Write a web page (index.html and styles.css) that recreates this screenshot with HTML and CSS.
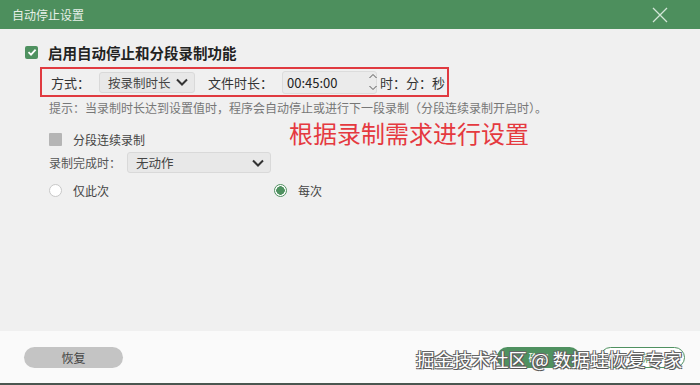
FILE: index.html
```html
<!DOCTYPE html>
<html>
<head lang="zh">
    <meta charset="UTF-8">
    <title>自动停止设置</title>
    <link rel="stylesheet" href="styles.css">
</head>
<body>
    <div class="dialog">
        <div class="titlebar">
            <span class="title">自动停止设置</span>
            <svg class="close" width="16" height="16" viewBox="0 0 16 16">
                <path d="M1 1 L15 15 M15 1 L1 15" stroke="#d3e6d8" stroke-width="1.3" fill="none"/>
            </svg>
        </div>
        <div class="content">
            <div class="main-check">
                <span class="chk on">
                    <svg width="12" height="12" viewBox="0 0 12 12"><path d="M2.5 6.2 L5 8.6 L9.6 3.6" stroke="#fff" stroke-width="1.8" fill="none"/></svg>
                </span>
                <span class="main-label">启用自动停止和分段录制功能</span>
            </div>
            <div class="mode-box">
                <span class="lbl">方式：</span>
                <div class="select sel-mode">
                    <span>按录制时长</span>
                    <svg width="14" height="10" viewBox="0 0 14 10"><path d="M2 2.5 L7 7.5 L12 2.5" stroke="#333" stroke-width="2" fill="none"/></svg>
                </div>
                <span class="lbl lbl-len">文件时长：</span>
                <div class="time-input">
                    <span>00:45:00</span>
                    <svg width="10" height="20" viewBox="0 0 10 20"><path d="M1.5 6 L5 2.5 L8.5 6 M1.5 14 L5 17.5 L8.5 14" stroke="#555" stroke-width="1" fill="none"/></svg>
                </div>
                <span class="unit">时：分：秒</span>
            </div>
            <p class="hint">提示：当录制时长达到设置值时，程序会自动停止或进行下一段录制（分段连续录制开启时）。</p>
            <div class="seg-row">
                <span class="chk off"></span>
                <span>分段连续录制</span>
            </div>
            <div class="done-row">
                <span>录制完成时：</span>
                <div class="select sel-done">
                    <span>无动作</span>
                    <svg width="14" height="10" viewBox="0 0 14 10"><path d="M2 2.5 L7 7.5 L12 2.5" stroke="#333" stroke-width="2" fill="none"/></svg>
                </div>
            </div>
            <div class="radio-row">
                <label class="radio-item"><span class="radio"></span>仅此次</label>
                <label class="radio-item"><span class="radio checked"></span>每次</label>
            </div>
            <div class="annot">根据录制需求进行设置</div>
        </div>
        <div class="footer">
            <button class="btn btn-reset">恢复</button>
            <div class="btn-group">
                <button class="btn btn-ok">确定</button>
                <button class="btn btn-cancel">取消</button>
            </div>
            <div class="watermark">掘金技术社区 @ 数据蛙恢复专家</div>
        </div>
    </div>
</body>
</html>
```

FILE: styles.css
```css
* {
    margin: 0;
    padding: 0;
    box-sizing: border-box;
}
body {
    width: 700px;
    height: 385px;
    overflow: hidden;
    font-family: "Noto Sans CJK SC", "Noto Sans", sans-serif;
    color: #333;
    background: #f0f0f0;
}
.dialog {
    width: 700px;
    height: 385px;
    display: flex;
    flex-direction: column;
}
.titlebar {
    height: 29px;
    background: #4d8f5d;
    display: flex;
    align-items: center;
    justify-content: space-between;
    padding: 0 32px 0 12px;
}
.title {
    color: #e6f0e8;
    font-size: 12px;
}
.close {
    display: block;
}
.content {
    flex: 1;
    position: relative;
    padding-top: 13px;
}
.main-check {
    display: flex;
    align-items: center;
    height: 20px;
    padding-left: 25px;
}
.chk {
    width: 13px;
    height: 13px;
    border-radius: 2px;
    display: inline-flex;
    align-items: center;
    justify-content: center;
}
.chk.on {
    background: #4f9160;
}
.chk.off {
    background: #b5b5b5;
    border-radius: 1px;
}
.main-label {
    margin-left: 10px;
    font-size: 14.5px;
    font-weight: bold;
    color: #222;
}
.mode-box {
    margin: 5px 0 0 40px;
    width: 409px;
    height: 30px;
    border: 2px solid #e03a40;
    display: flex;
    align-items: center;
    padding-left: 9px;
    font-size: 13px;
    color: #333;
}
.lbl {
    width: 48px;
}
.lbl-len {
    width: 74px;
    margin-left: 13px;
}
.select {
    height: 21px;
    background: #e8e8e8;
    border: 1px solid #d9d9d9;
    border-radius: 3px;
    display: flex;
    align-items: center;
    justify-content: space-between;
    padding: 0 5px 0 8px;
    font-size: 12.5px;
    color: #444;
}
.sel-mode {
    width: 96px;
}
.time-input {
    width: 95px;
    height: 23px;
    background: #ebebeb;
    border: 1px solid #dcdcdc;
    border-radius: 3px;
    display: flex;
    align-items: center;
    justify-content: space-between;
    padding: 0 0 0 4px;
    font-size: 13px;
    color: #222;
}
.time-input svg {
    margin-right: -2px;
}
.unit {
    margin-left: 3px;
    font-size: 13px;
    color: #333;
}
.hint {
    margin: 3px 0 0 49px;
    font-size: 12px;
    line-height: 16px;
    color: #777;
}
.seg-row {
    margin: 13px 0 0 49px;
    height: 20px;
    display: flex;
    align-items: center;
    gap: 11px;
    font-size: 12px;
    color: #444;
}
.done-row {
    margin: 3px 0 0 49px;
    display: flex;
    align-items: center;
    font-size: 12px;
    color: #555;
}
.sel-done {
    width: 144px;
    margin-left: 6px;
}
.radio-row {
    margin: 7px 0 0 49px;
    height: 20px;
    display: flex;
    align-items: center;
    font-size: 12px;
    color: #444;
}
.radio-item {
    display: flex;
    align-items: center;
    gap: 11px;
    width: 225px;
}
.radio {
    width: 13px;
    height: 13px;
    border: 1px solid #c8c8c8;
    border-radius: 50%;
    background: #fff;
}
.radio.checked {
    border: 1px solid #4f9160;
    background: radial-gradient(circle, #4f9160 0 4px, #fff 4.5px);
}
.annot {
    position: absolute;
    left: 289px;
    top: 89px;
    font-size: 24px;
    line-height: 30px;
    color: #e5393f;
}
.footer {
    height: 54px;
    background: #fafafa;
    border-bottom: 2px solid #4a5650;
    position: relative;
    display: flex;
    align-items: center;
    justify-content: space-between;
    padding: 0 15px 0 24px;
}
.btn {
    height: 21px;
    border-radius: 11px;
    font-family: inherit;
    font-size: 10px;
    border: none;
}
.btn-reset {
    width: 99px;
    background: #c4c4c4;
    color: #444;
    font-size: 12px;
}
.btn-group {
    display: flex;
    gap: 20px;
}
.btn-ok {
    width: 83px;
    background: #4f9160;
    color: #fff;
}
.btn-cancel {
    width: 85px;
    background: #fff;
    border: 1px solid #4f9160;
    color: #4f9160;
}
.watermark {
    position: absolute;
    left: 416px;
    top: 15px;
    font-size: 18.5px;
    color: #fff;
    text-shadow: 1px 1px 0 #555, -1px -1px 0 #666, 1px -1px 0 #666, -1px 1px 0 #666;
}
```
